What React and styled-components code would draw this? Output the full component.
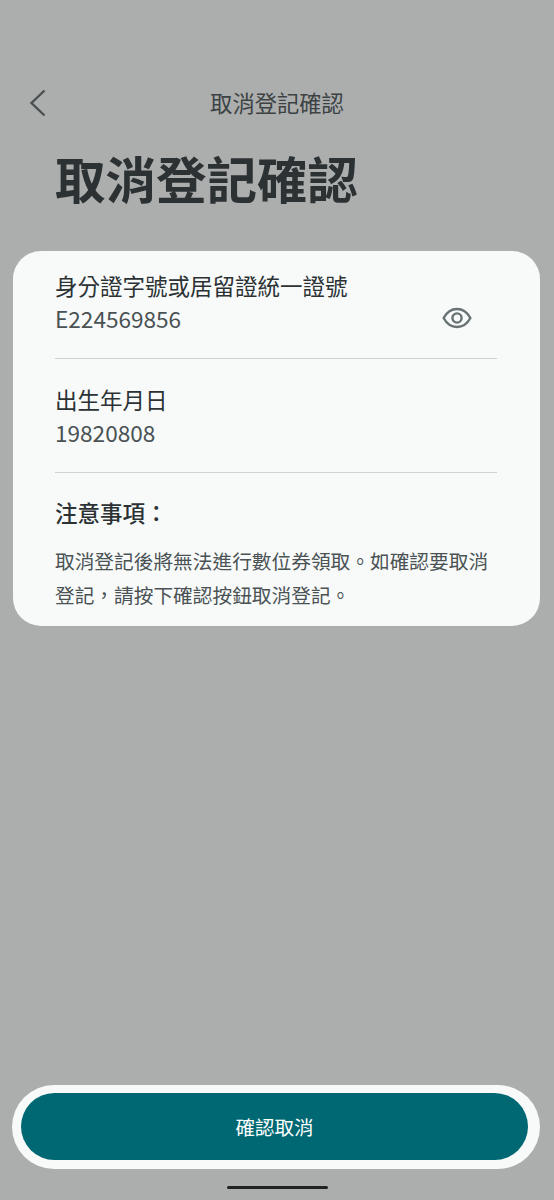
import styled, { createGlobalStyle } from "styled-components";

const GlobalStyle = createGlobalStyle`
  html, body {
    margin: 0;
    padding: 0;
    background: #acaeae;
  }
  * {
    box-sizing: border-box;
  }
`;

export default function App() {
  return (
    <>
      <GlobalStyle />
      <Page>
        <Header>
          <BackButton aria-label="返回">
            <svg width="18" height="28" viewBox="0 0 18 28" fill="none">
              <path d="M15.5 1.5 L2.5 14 L15.5 26.5" stroke="#4a5052" strokeWidth="2.4" />
            </svg>
          </BackButton>
          <HeaderTitle>取消登記確認</HeaderTitle>
        </Header>
        <PageTitle>取消登記確認</PageTitle>
        <Card>
          <Field>
            <FieldText>
              <Label>身分證字號或居留證統一證號</Label>
              <Value>E224569856</Value>
            </FieldText>
            <EyeButton aria-label="顯示">
              <svg width="30" height="22" viewBox="0 0 30 22" fill="none" stroke="#687173" strokeWidth="2.4">
                <path d="M1.6 11 C5 4.8 9.6 2 15 2 C20.4 2 25 4.8 28.4 11 C25 17.2 20.4 20 15 20 C9.6 20 5 17.2 1.6 11 Z" />
                <circle cx="15" cy="11" r="4.6" />
              </svg>
            </EyeButton>
          </Field>
          <Field>
            <FieldText>
              <Label>出生年月日</Label>
              <Value>19820808</Value>
            </FieldText>
          </Field>
          <Notes>
            <NotesTitle>注意事項：</NotesTitle>
            <NotesText>
              取消登記後將無法進行數位券領取。如確認要取消登記，請按下確認按鈕取消登記。
            </NotesText>
          </Notes>
        </Card>
        <Footer>
          <ButtonFrame>
            <ConfirmButton>確認取消</ConfirmButton>
          </ButtonFrame>
          <HomeBar />
        </Footer>
      </Page>
    </>
  );
}

const Page = styled.div`
  display: flex;
  flex-direction: column;
  width: 554px;
  height: 1200px;
  overflow: hidden;
  background: #acaeae;
  font-family: "Noto Sans CJK TC", "Noto Sans", sans-serif;
`;

const Header = styled.header`
  display: flex;
  align-items: center;
  justify-content: center;
  position: relative;
  height: 32px;
  margin-top: 86px;
`;

const BackButton = styled.button`
  position: absolute;
  left: 29px;
  top: 3px;
  display: flex;
  padding: 0;
  border: none;
  background: none;
`;

const HeaderTitle = styled.h2`
  margin: 0;
  font-size: 22.3px;
  font-weight: 400;
  line-height: 32px;
  color: #3c4244;
`;

const PageTitle = styled.h1`
  margin: 24px 0 0 55px;
  font-size: 50.5px;
  font-weight: 700;
  line-height: 70px;
  color: #2c3234;
`;

const Card = styled.section`
  display: flex;
  flex-direction: column;
  width: 527px;
  height: 375px;
  margin: 39px 0 0 12.5px;
  padding: 0 43px 0 42.5px;
  border-radius: 28px;
  background: #f8fafa;
`;

const Field = styled.div`
  display: flex;
  align-items: flex-end;
  justify-content: space-between;
  height: 114px;
  padding: 18px 0 23px;
  border-bottom: 1.5px solid #cdd3d4;

  &:first-child {
    height: 108px;
    padding-top: 19px;
  }
`;

const FieldText = styled.div`
  display: flex;
  flex-direction: column;
`;

const Label = styled.div`
  font-size: 22.5px;
  line-height: 33px;
  color: #2c3234;
`;

const Value = styled.div`
  font-size: 22.6px;
  line-height: 33px;
  color: #4a5254;
`;

const EyeButton = styled.button`
  display: flex;
  margin: 0 25px 6px 0;
  padding: 0;
  border: none;
  background: none;
`;

const Notes = styled.div`
  display: flex;
  flex-direction: column;
  padding-top: 22px;
`;

const NotesTitle = styled.div`
  font-size: 22.5px;
  font-weight: 500;
  line-height: 34px;
  color: #2c3234;
`;

const NotesText = styled.p`
  margin: 14.5px 0 0;
  font-size: 19.7px;
  line-height: 34px;
  color: #4a5254;
`;

const Footer = styled.footer`
  display: flex;
  flex-direction: column;
  align-items: center;
  margin-top: auto;
  padding-bottom: 11px;
`;

const ButtonFrame = styled.div`
  display: flex;
  width: 528px;
  height: 84px;
  margin-right: 2px;
  padding: 8px 12px 9px 9px;
  border-radius: 42px;
  background: #f8fafa;
`;

const ConfirmButton = styled.button`
  flex: 1;
  border: none;
  border-radius: 34px;
  background: #006873;
  font-family: inherit;
  font-size: 19.5px;
  line-height: 28px;
  color: #ffffff;
`;

const HomeBar = styled.div`
  width: 101px;
  height: 3px;
  margin-top: 17px;
  border-radius: 2px;
  background: #222222;
`;
